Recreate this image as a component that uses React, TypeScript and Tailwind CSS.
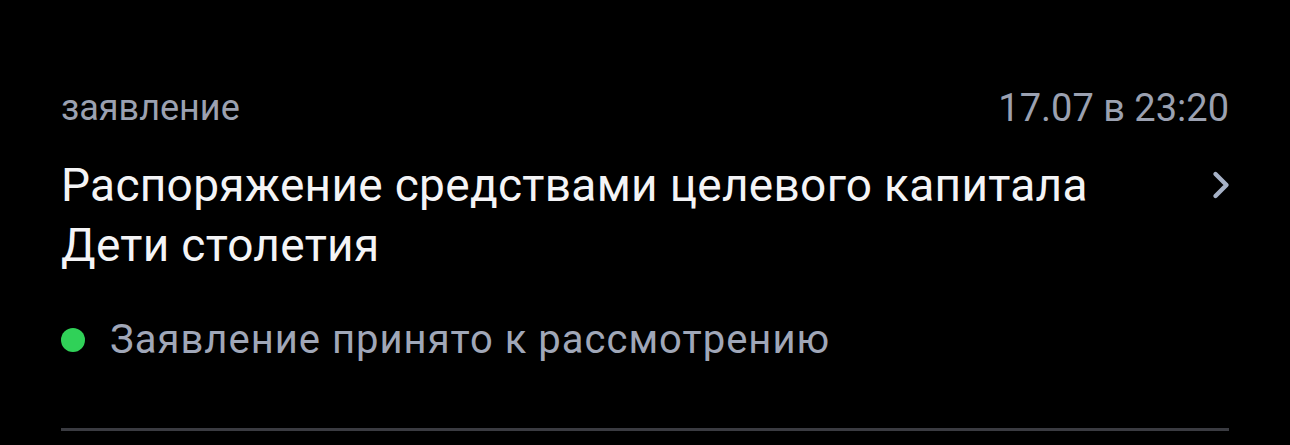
import { ChevronRight } from "lucide-react"

export default function App() {
  return (
    <div className="w-[1290px] h-[445px] bg-black overflow-hidden" style={{ fontFamily: "Roboto, 'Noto Sans', sans-serif" }}>
      <div className="pl-[61px] pr-[61px] pt-[86px]">
        <div className="flex items-center justify-between text-[36px] leading-[44px] text-[#9ba1b1]">
          <span>заявление</span>
          <span className="text-[38px]">17.07 в 23:20</span>
        </div>

        <div className="mt-[25px] flex items-start justify-between">
          <div className="text-[46px] leading-[60px] tracking-[0.3px] text-[#f4f4f6]">
            Распоряжение средствами целевого капитала
            <br />
            Дети столетия
          </div>
          <ChevronRight className="mt-[8px] -mr-[14px] w-[44px] h-[44px] text-[#a6b1c6]" strokeWidth={2.4} />
        </div>

        <div className="mt-[41px] flex items-center gap-[25px]">
          <span className="w-[24px] h-[24px] rounded-full bg-[#30d158]" />
          <span className="text-[40px] leading-[48px] tracking-[1px] text-[#a0a7b8]">Заявление принято к рассмотрению</span>
        </div>

        <div className="mt-[64px] h-[3px] bg-[#3a3b41]" />
      </div>
    </div>
  )
}
